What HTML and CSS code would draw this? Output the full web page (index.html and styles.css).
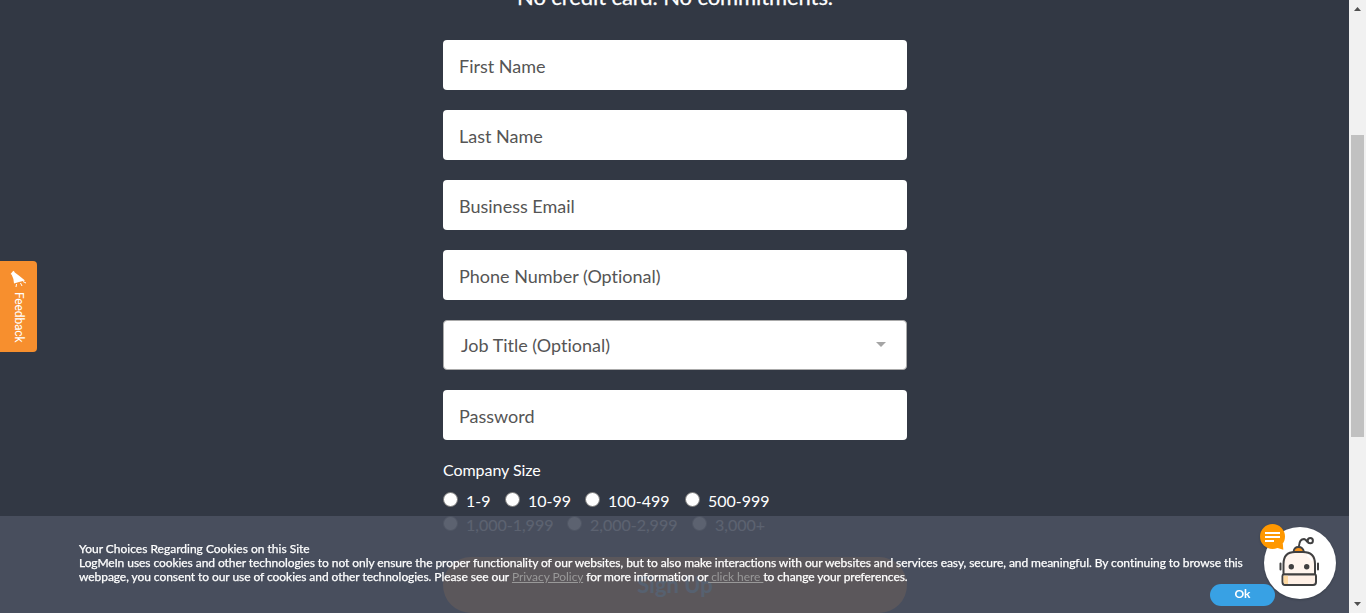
FILE: index.html
```html
<!DOCTYPE html>
<html lang="en">
<head>
<meta charset="utf-8">
<title>Sign Up</title>
<link rel="stylesheet" href="styles.css">
</head>
<body>
<main class="page">
  <form class="signup">
    <h2 class="headline">No credit card. No commitments.</h2>
    <div class="field">First Name</div>
    <div class="field">Last Name</div>
    <div class="field">Business Email</div>
    <div class="field">Phone Number (Optional)</div>
    <div class="field select">Job Title (Optional)<i class="caret"></i></div>
    <div class="field">Password</div>
    <div class="label">Company Size</div>
    <div class="sizes">
      <div class="size-row">
        <label class="size s1"><i class="radio"></i>1-9</label>
        <label class="size s2"><i class="radio"></i>10-99</label>
        <label class="size s3"><i class="radio"></i>100-499</label>
        <label class="size"><i class="radio"></i>500-999</label>
      </div>
      <div class="size-row">
        <label class="size s5"><i class="radio"></i>1,000-1,999</label>
        <label class="size s6"><i class="radio"></i>2,000-2,999</label>
        <label class="size"><i class="radio"></i>3,000+</label>
      </div>
    </div>
    <div class="submit">Sign Up</div>
  </form>
</main>

<aside class="feedback">
  <svg class="horn" width="17" height="18" viewBox="0 0 17 18">
    <path d="M3.500 1.500 Q9 5.500 15 10.500 L9 12 L4 13.500 Q4 9 1.800 5 Z" fill="#fff"/>
    <path d="M1.300 4.500 L4 1.300" stroke="#fff" stroke-width="1.800"/>
    <path d="M10.500 13 L12 16 M6.500 14 L6 17 M13 11.500 L16 13" stroke="#fff" stroke-width="1"/>
  </svg>
  <span class="feedback-text">Feedback</span>
</aside>

<section class="cookies">
  <div class="cookie-text">
    <div class="line">Your Choices Regarding Cookies on this Site</div>
    <div class="line l2">LogMeIn uses cookies and other technologies to not only ensure the proper functionality of our websites, but to also make interactions with our websites and services easy, secure, and meaningful. By continuing to browse this</div>
    <div class="line l3">webpage, you consent to our use of cookies and other technologies. Please see our <a>Privacy Policy</a> for more information or<a> click here </a>to change your preferences.</div>
  </div>
  <div class="ok">Ok</div>
</section>

<svg class="bot" width="84" height="84" viewBox="1256 519 84 84">
  <circle cx="1300" cy="563" r="36" fill="#fff"/>
  <g stroke="#404041" stroke-width="2" fill="none" stroke-linejoin="round" stroke-linecap="round">
    <path d="M1299 546 Q1299.500 539 1304 539 Q1306 539.500 1307 541.500"/>
    <circle cx="1310.300" cy="540.700" r="2.600"/>
    <path d="M1293.500 552 Q1294 547 1298.500 547 Q1303 547 1304 552 Z" fill="#f7941d" stroke-width="1.800"/>
    <path d="M1283.500 574.500 V564 Q1283.500 552 1295 552 H1303 Q1315 552 1315 564 V574.500 Z" fill="#fff5ee"/>
    <path d="M1283.500 574.500 H1315 Q1316 574.500 1316 576 V582 Q1316 585 1313 585 H1285 Q1282.500 585 1282.500 582 V576 Q1282.500 574.500 1283.500 574.500 Z" fill="#fff0e6"/>
    <path d="M1280.500 563.500 V569.500 M1318 563.500 V569.500"/>
  </g>
  <path d="M1283.600 575.700 H1288 V583.900 H1285.500 Q1283.600 584 1283.600 582 Z" fill="#ffd9a0"/>
  <path d="M1307 555 Q1311 557 1312 561" stroke="#fff" stroke-width="1.500" fill="none"/>
  <circle cx="1291.300" cy="566.700" r="2.700" fill="#404041"/>
  <circle cx="1306.700" cy="566.700" r="2.700" fill="#404041"/>
  <path d="M1282.800 543.500 L1283.300 549.700 L1276 547.500 Z" fill="#ff9800"/>
  <circle cx="1272.500" cy="536.500" r="12.500" fill="#ff9800"/>
  <path d="M1265 533 H1280 M1265 537 H1280 M1265 541 H1274" stroke="#fff" stroke-width="2"/>
</svg>

<div class="scrollbar">
  <svg class="arrow" width="7" height="4" viewBox="0 0 7 4"><path d="M3.500 0 L7 4 H0 Z" fill="#505050"/></svg>
  <div class="thumb"></div>
  <svg class="arrow" width="7" height="4" viewBox="0 0 7 4"><path d="M0 0 H7 L3.500 4 Z" fill="#505050"/></svg>
</div>
</body>
</html>
```
FILE: styles.css
```css
* { box-sizing: border-box; }
body {
  margin: 0;
  height: 613px;
  overflow: hidden;
  background: #323844;
  color: #fff;
  font-family: Lato, "Open Sans", sans-serif;
  font-variant-ligatures: none;
}
.page { width: 1349px; height: 613px; overflow: hidden; }
.signup { width: 464px; margin-left: 443px; }
.headline {
  margin: -18px 0 28px;
  height: 30px;
  line-height: 30px;
  font-size: 22px;
  font-weight: 400;
  letter-spacing: -.09px;
  -webkit-text-stroke: .25px;
  text-align: center;
  white-space: nowrap;
}
.field {
  display: flex;
  align-items: center;
  height: 50px;
  margin-bottom: 20px;
  padding: 1px 16px 0;
  border-radius: 4px;
  background: #fff;
  color: #555;
  font-size: 18px;
}
.select {
  justify-content: space-between;
  padding: 0 20px 0 17px;
  border: 1px solid #aaa;
}
.caret {
  border: 5px solid transparent;
  border-top-color: #a5a5a5;
  border-bottom: 0;
  margin-top: -1px;
}
.label { height: 20px; line-height: 20px; font-size: 16px; letter-spacing: -.05px; }
.sizes { padding-top: 10px; }
.size-row { display: flex; height: 24px; }
.size {
  display: flex;
  align-items: flex-start;
  font-size: 16px;
  line-height: 22px;
  gap: 8px;
}
.radio {
  width: 15px;
  height: 15px;
  margin-top: 2px;
  border: 1px solid #777;
  border-radius: 50%;
  background: #fff;
}
.s1 { width: 62px; }
.s2 { width: 80px; }
.s3 { width: 100px; }
.s5 { width: 124px; }
.s6 { width: 125px; }
.submit {
  height: 56px;
  margin-top: 19px;
  border-radius: 28px;
  background: #f68d2e;
  color: #c4f0ff;
  font-size: 22px;
  font-weight: 700;
  line-height: 56px;
  text-align: center;
}
.feedback {
  position: fixed;
  left: 0;
  top: 261px;
  width: 37px;
  height: 91px;
  padding: 9px 0 0 10px;
  border-radius: 0 4px 4px 0;
  background: #f78f2e;
}
.horn { display: block; }
.feedback-text {
  display: block;
  margin-top: 4px;
  writing-mode: vertical-rl;
  font-family: Roboto, sans-serif;
  font-size: 12px;
  line-height: 17px;
  letter-spacing: -.15px;
}
.cookies {
  position: fixed;
  left: 0;
  top: 516px;
  width: 1349px;
  height: 97px;
  padding: 26px 74px 0 79px;
  background: rgba(74, 81, 96, .9);
}
.cookie-text { font-size: 12px; line-height: 14px; white-space: nowrap; -webkit-text-stroke: .25px; }
.l2 { letter-spacing: -.063px; }
.l3 { letter-spacing: -.06px; }
.cookie-text a { color: #999; text-decoration: underline; -webkit-text-stroke: 0; }
.ok {
  width: 65px;
  height: 22px;
  margin: 0 0 0 auto;
  border-radius: 11px;
  background: #38a1e4;
  font-size: 12px;
  font-weight: 700;
  line-height: 20px;
  text-align: center;
}
.bot {
  position: fixed;
  left: 1256px;
  top: 519px;
  filter: drop-shadow(0 1px 1px rgba(0, 0, 0, .2));
}
.scrollbar {
  position: fixed;
  right: 0;
  top: 0;
  width: 17px;
  height: 613px;
  padding: 7px 0 7px;
  background: #f1f1f1;
  display: flex;
  flex-direction: column;
  align-items: center;
}
.thumb { width: 13px; height: 302px; margin: 124px 0 165px; background: #c1c1c1; flex: none; }
.arrow { display: block; flex: none; }
```
